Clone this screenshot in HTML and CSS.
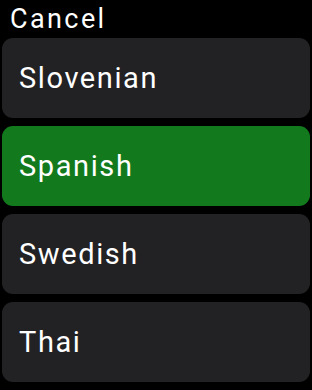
FILE: index.html
```html
<!DOCTYPE html>
<html>
<head>
<meta charset="utf-8">
<link rel="stylesheet" href="styles.css">
</head>
<body>
<div class="screen">
  <div class="header">Cancel</div>
  <div class="list">
    <div class="item">Slovenian</div>
    <div class="item selected">Spanish</div>
    <div class="item">Swedish</div>
    <div class="item">Thai</div>
  </div>
</div>
</body>
</html>
```
FILE: styles.css
```css
html, body {
  margin: 0;
  padding: 0;
  background: #000;
}
.screen {
  width: 312px;
  height: 390px;
  overflow: hidden;
  background: #000;
  color: #fff;
  font-family: Roboto, "Noto Sans", sans-serif;
}
.header {
  height: 38px;
  box-sizing: border-box;
  padding-left: 10px;
  padding-top: 4px;
  font-size: 27px;
  line-height: 30px;
  letter-spacing: 2.4px;
}
.list {
  display: flex;
  flex-direction: column;
  gap: 8px;
  padding: 0 2px;
}
.item {
  height: 80px;
  border-radius: 11px;
  background: #222224;
  display: flex;
  align-items: center;
  padding-left: 17px;
  font-size: 29px;
  letter-spacing: 1.6px;
}
.item.selected {
  background: #127a1d;
}
```
